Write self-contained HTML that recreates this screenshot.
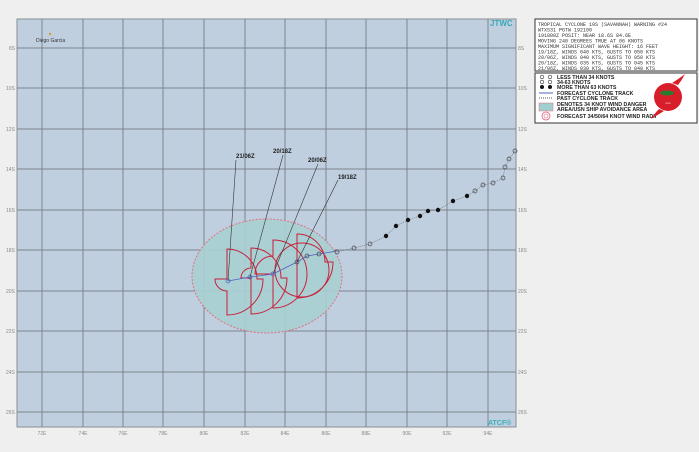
<!DOCTYPE html><html><head><style>
body{margin:0;background:#efefef;width:699px;height:447px;overflow:hidden;font-family:"Liberation Sans",sans-serif}
</style></head><body>
<svg width="699" height="447" xmlns="http://www.w3.org/2000/svg" font-family="Liberation Sans, sans-serif">
<rect x="17" y="19" width="499" height="408" fill="#c0cfe0" stroke="#8a8f95"/>
<g stroke="#7d848c" stroke-width="1">
<line x1="42" y1="19" x2="42" y2="427"/><line x1="83" y1="19" x2="83" y2="427"/><line x1="123" y1="19" x2="123" y2="427"/><line x1="163" y1="19" x2="163" y2="427"/><line x1="204" y1="19" x2="204" y2="427"/><line x1="245" y1="19" x2="245" y2="427"/><line x1="285" y1="19" x2="285" y2="427"/><line x1="326" y1="19" x2="326" y2="427"/><line x1="366" y1="19" x2="366" y2="427"/><line x1="407" y1="19" x2="407" y2="427"/><line x1="447" y1="19" x2="447" y2="427"/><line x1="488" y1="19" x2="488" y2="427"/>
<line x1="17" y1="48" x2="516" y2="48"/><line x1="17" y1="88" x2="516" y2="88"/><line x1="17" y1="129" x2="516" y2="129"/><line x1="17" y1="169" x2="516" y2="169"/><line x1="17" y1="210" x2="516" y2="210"/><line x1="17" y1="250" x2="516" y2="250"/><line x1="17" y1="291" x2="516" y2="291"/><line x1="17" y1="331" x2="516" y2="331"/><line x1="17" y1="372" x2="516" y2="372"/><line x1="17" y1="412" x2="516" y2="412"/>
</g>
<g font-size="5" fill="#888" text-anchor="middle">
<text x="42" y="435">72E</text><text x="83" y="435">74E</text><text x="123" y="435">76E</text><text x="163" y="435">78E</text><text x="204" y="435">80E</text><text x="245" y="435">82E</text><text x="285" y="435">84E</text><text x="326" y="435">86E</text><text x="366" y="435">88E</text><text x="407" y="435">90E</text><text x="447" y="435">92E</text><text x="488" y="435">94E</text>
</g>
<g font-size="5" fill="#888">
<text x="9" y="50">8S</text><text x="6" y="90">10S</text><text x="6" y="131">12S</text><text x="6" y="171">14S</text><text x="6" y="212">16S</text><text x="6" y="252">18S</text><text x="6" y="293">20S</text><text x="6" y="333">22S</text><text x="6" y="374">24S</text><text x="6" y="414">26S</text>
<text x="518" y="50">8S</text><text x="518" y="90">10S</text><text x="518" y="131">12S</text><text x="518" y="171">14S</text><text x="518" y="212">16S</text><text x="518" y="252">18S</text><text x="518" y="293">20S</text><text x="518" y="333">22S</text><text x="518" y="374">24S</text><text x="518" y="414">26S</text>
</g>
<text x="490" y="26" font-size="8" font-weight="bold" fill="#3aa8b8">JTWC</text>
<text x="488" y="425" font-size="7" font-weight="bold" fill="#3ab0bb">ATCF®</text>
<circle cx="50" cy="34" r="1.2" fill="#c9a030"/>
<text x="36" y="42" font-size="5" fill="#333">Diego Garcia</text>
<ellipse cx="267" cy="276" rx="75" ry="57" fill="#a9cfd2" fill-opacity="0.9" stroke="#e07080" stroke-dasharray="2,1.5"/>
<g id="radii" fill="none" stroke="#c8203a" stroke-width="1"></g>
<polyline points="228,281 250,277 273,274 297,262 307,256 319,254 337,251" fill="none" stroke="#5060c0" stroke-width="0.8"/>
<polyline points="337,252 354,248 370,244 386,236 396,226 408,220 420,216 428,211 438,210 453,201 467,196 475,191 483,185 493,183 503,178 505,167 509,159 515,151" fill="none" stroke="#666" stroke-width="0.6" stroke-dasharray="1,1"/>
<g fill="none" stroke="#444" stroke-width="0.7">
<circle cx="337" cy="252" r="2"/><circle cx="354" cy="248" r="2"/><circle cx="370" cy="244" r="2"/><circle cx="475" cy="191" r="2"/><circle cx="483" cy="185" r="2"/><circle cx="493" cy="183" r="2"/><circle cx="503" cy="178" r="2"/><circle cx="505" cy="167" r="2"/><circle cx="509" cy="159" r="2"/><circle cx="515" cy="151" r="2"/>
<circle cx="297" cy="262" r="2"/><circle cx="307" cy="256" r="2"/><circle cx="319" cy="254" r="2"/>
<circle cx="273" cy="274" r="2" stroke="#5060c0"/><circle cx="250" cy="277" r="2" stroke="#5060c0"/><circle cx="228" cy="281" r="2" stroke="#5060c0"/>
</g>
<g fill="#111"><circle cx="386" cy="236" r="2.2"/><circle cx="396" cy="226" r="2.2"/><circle cx="408" cy="220" r="2.2"/><circle cx="420" cy="216" r="2.2"/><circle cx="428" cy="211" r="2.2"/><circle cx="438" cy="210" r="2.2"/><circle cx="453" cy="201" r="2.2"/><circle cx="467" cy="196" r="2.2"/></g>
<g stroke="#333" stroke-width="0.6"><line x1="236" y1="160" x2="228" y2="281"/><line x1="283" y1="155" x2="250" y2="277"/><line x1="318" y1="164" x2="273" y2="274"/><line x1="338" y1="180" x2="297" y2="262"/></g>
<g font-size="6" fill="#222" font-weight="bold"><text x="236" y="158">21/06Z</text><text x="273" y="153">20/18Z</text><text x="308" y="162">20/06Z</text><text x="338" y="179">19/18Z</text></g>
<rect x="535" y="19" width="162" height="52" fill="#fff" stroke="#333"/>
<g font-family="Liberation Mono, monospace" font-size="5" fill="#333">
<text x="538" y="26">TROPICAL CYCLONE 19S (SAVANNAH) WARNING #24</text>
<text x="538" y="31.5">WTXS31 PGTW 192100</text>
<text x="538" y="37">191800Z POSIT: NEAR 18.6S 84.6E</text>
<text x="538" y="42.5">MOVING 240 DEGREES TRUE AT 06 KNOTS</text>
<text x="538" y="48">MAXIMUM SIGNIFICANT WAVE HEIGHT: 16 FEET</text>
<text x="538" y="53.5">19/18Z, WINDS 040 KTS, GUSTS TO 050 KTS</text>
<text x="538" y="59">20/06Z, WINDS 040 KTS, GUSTS TO 050 KTS</text>
<text x="538" y="64.5">20/18Z, WINDS 035 KTS, GUSTS TO 045 KTS</text>
<text x="538" y="70">21/06Z, WINDS 030 KTS, GUSTS TO 040 KTS</text>
</g>
<rect x="535" y="73" width="162" height="50" fill="#fff" stroke="#333"/>
<g font-size="5.3" font-weight="bold" fill="#222">
<text x="557" y="79">LESS THAN 34 KNOTS</text><text x="557" y="84">34-63 KNOTS</text><text x="557" y="89">MORE THAN 63 KNOTS</text><text x="557" y="95">FORECAST CYCLONE TRACK</text><text x="557" y="100">PAST CYCLONE TRACK</text><text x="557" y="106">DENOTES 34 KNOT WIND DANGER</text><text x="557" y="111">AREA/USN SHIP AVOIDANCE AREA</text><text x="557" y="118">FORECAST 34/50/64 KNOT WIND RADII</text>
</g>
<g fill="none" stroke="#333" stroke-width="0.6"><circle cx="542" cy="77" r="1.8"/><circle cx="550" cy="77" r="1.8"/><circle cx="542" cy="82" r="1.8"/><circle cx="550" cy="82" r="1.8"/></g>
<circle cx="542" cy="87" r="2" fill="#111"/><circle cx="550" cy="87" r="2" fill="#111"/>
<line x1="539" y1="93" x2="553" y2="93" stroke="#5060c0"/><line x1="539" y1="98" x2="553" y2="98" stroke="#555" stroke-dasharray="1,1"/>
<rect x="539" y="103" width="14" height="8" fill="#9fcfcf" stroke="#e07080" stroke-width="0.5"/>
<circle cx="546" cy="116" r="4" fill="none" stroke="#e06080" stroke-width="0.8"/><circle cx="546" cy="116" r="2" fill="none" stroke="#e06080" stroke-width="0.6"/>
<circle cx="668" cy="97" r="14" fill="#d81e2a"/>
<path d="M672 83 Q680 78 685 74 Q682 80 678 85 Z M664 111 Q656 116 651 119 Q655 113 659 109 Z" fill="#d81e2a"/>
<ellipse cx="667" cy="93" rx="7" ry="2.5" fill="#2a7a30"/>
<text x="668" y="104" font-size="2" fill="#fff" text-anchor="middle">JTWC</text>
</svg>
<script>
function q(cx,cy,ne,se,sw,nw){
 function a(r,x,y){return r>0?`A${r} ${r} 0 0 1 ${x} ${y}`:`L${x} ${y}`;}
 return `M${cx} ${cy-ne} ${a(ne,cx+ne,cy)} L${cx+se} ${cy} ${a(se,cx,cy+se)} L${cx} ${cy+sw} ${a(sw,cx-sw,cy)} L${cx-nw} ${cy} ${a(nw,cx,cy-nw)} Z`;
}
var d=[q(227,279,30,36,12,0),q(251,278,30,36,0,10),q(273,274,34,34,0,18),q(297,262,28,36,0,0)];
var g=document.getElementById('radii');
d.forEach(function(s){var p=document.createElementNS('http://www.w3.org/2000/svg','path');p.setAttribute('d',s);g.appendChild(p);});
var c=document.createElementNS('http://www.w3.org/2000/svg','circle');c.setAttribute('cx',302);c.setAttribute('cy',270);c.setAttribute('r',27);g.appendChild(c);
</script>
</body></html>
